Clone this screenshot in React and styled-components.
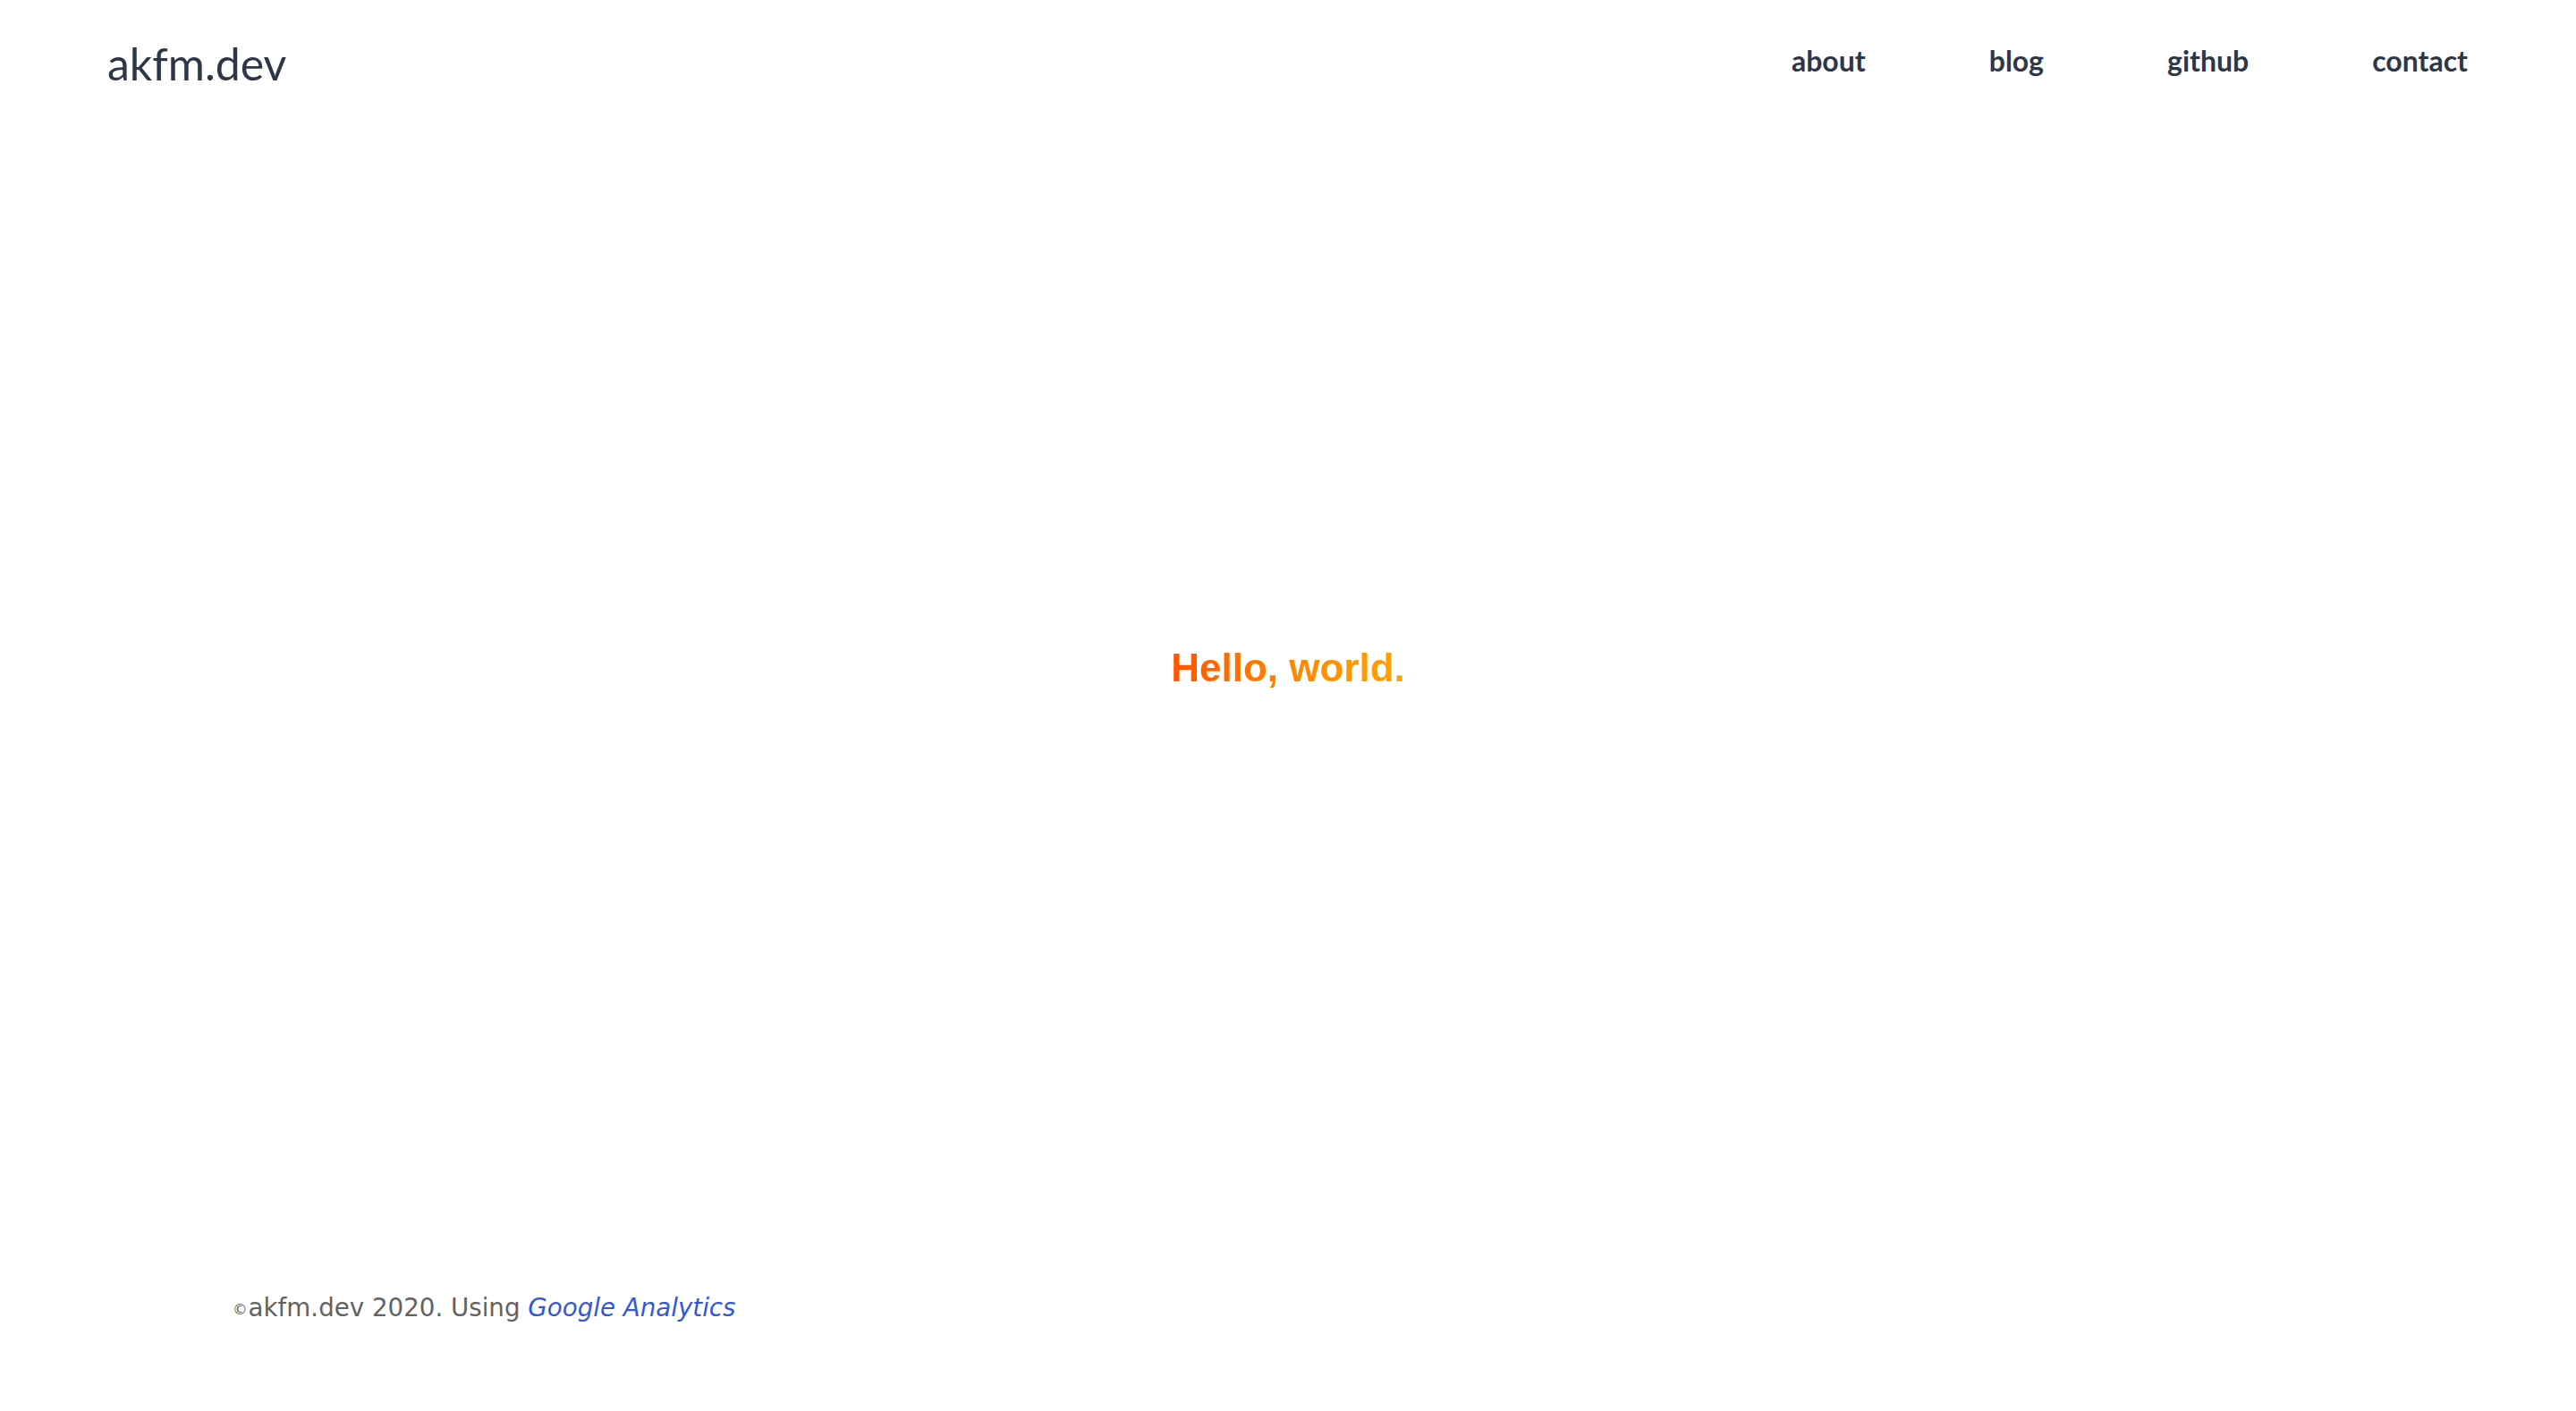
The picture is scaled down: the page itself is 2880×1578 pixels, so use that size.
import React from "react";
import styled, { createGlobalStyle } from "styled-components";

const Global = createGlobalStyle`
  html, body { margin: 0; padding: 0; background: #ffffff; }
  * { box-sizing: border-box; }
`;

const Page = styled.div`
  min-height: 100vh;
  display: flex;
  flex-direction: column;
`;

const Header = styled.header`
  height: 136px;
  padding: 0 121px 0 120px;
  display: flex;
  align-items: center;
  justify-content: space-between;
`;

const Logo = styled.a`
  font-family: "Lato", "Noto Sans", sans-serif;
  font-weight: 400;
  font-size: 50px;
  line-height: 1;
  color: #2d3748;
  text-decoration: none;
  margin-top: 6px;
`;

const Nav = styled.nav`
  display: flex;
  align-items: center;
  gap: 138px;
`;

const NavLink = styled.a`
  font-family: "Lato", "Noto Sans", sans-serif;
  font-weight: 700;
  font-size: 32px;
  line-height: 1;
  color: #2d3748;
  text-decoration: none;
`;

const Main = styled.main`
  flex: 1;
  display: flex;
  align-items: center;
  justify-content: center;
  padding-top: 2px;
`;

const Hello = styled.h1`
  margin: 0;
  display: inline-block;
  font-family: "Liberation Sans", Arial, sans-serif;
  font-weight: 700;
  font-size: 44px;
  line-height: 1.2;
  background: linear-gradient(90deg, #ff5400 0%, #ff8a00 55%, #ffa300 100%);
  -webkit-background-clip: text;
  background-clip: text;
  color: transparent;
`;

const Footer = styled.footer`
  padding: 87px 0 93px 260px;
  font-family: "DejaVu Sans", "Noto Sans", sans-serif;
  font-size: 27.7px;
  line-height: 40px;
  color: #626262;
`;

const Copy = styled.span`
  font-size: 0.6em;
  vertical-align: 2px;
  margin-right: 1px;
`;

const FooterLink = styled.a`
  color: #3358d4;
  font-style: italic;
  text-decoration: none;
`;

export default function App() {
  return (
    <>
      <Global />
      <Page>
        <Header>
          <Logo href="#">akfm.dev</Logo>
          <Nav>
            <NavLink href="#">about</NavLink>
            <NavLink href="#">blog</NavLink>
            <NavLink href="#">github</NavLink>
            <NavLink href="#">contact</NavLink>
          </Nav>
        </Header>
        <Main>
          <Hello>Hello, world.</Hello>
        </Main>
        <Footer>
          <Copy>©</Copy>akfm.dev 2020. Using <FooterLink href="#">Google Analytics</FooterLink>
        </Footer>
      </Page>
    </>
  );
}
